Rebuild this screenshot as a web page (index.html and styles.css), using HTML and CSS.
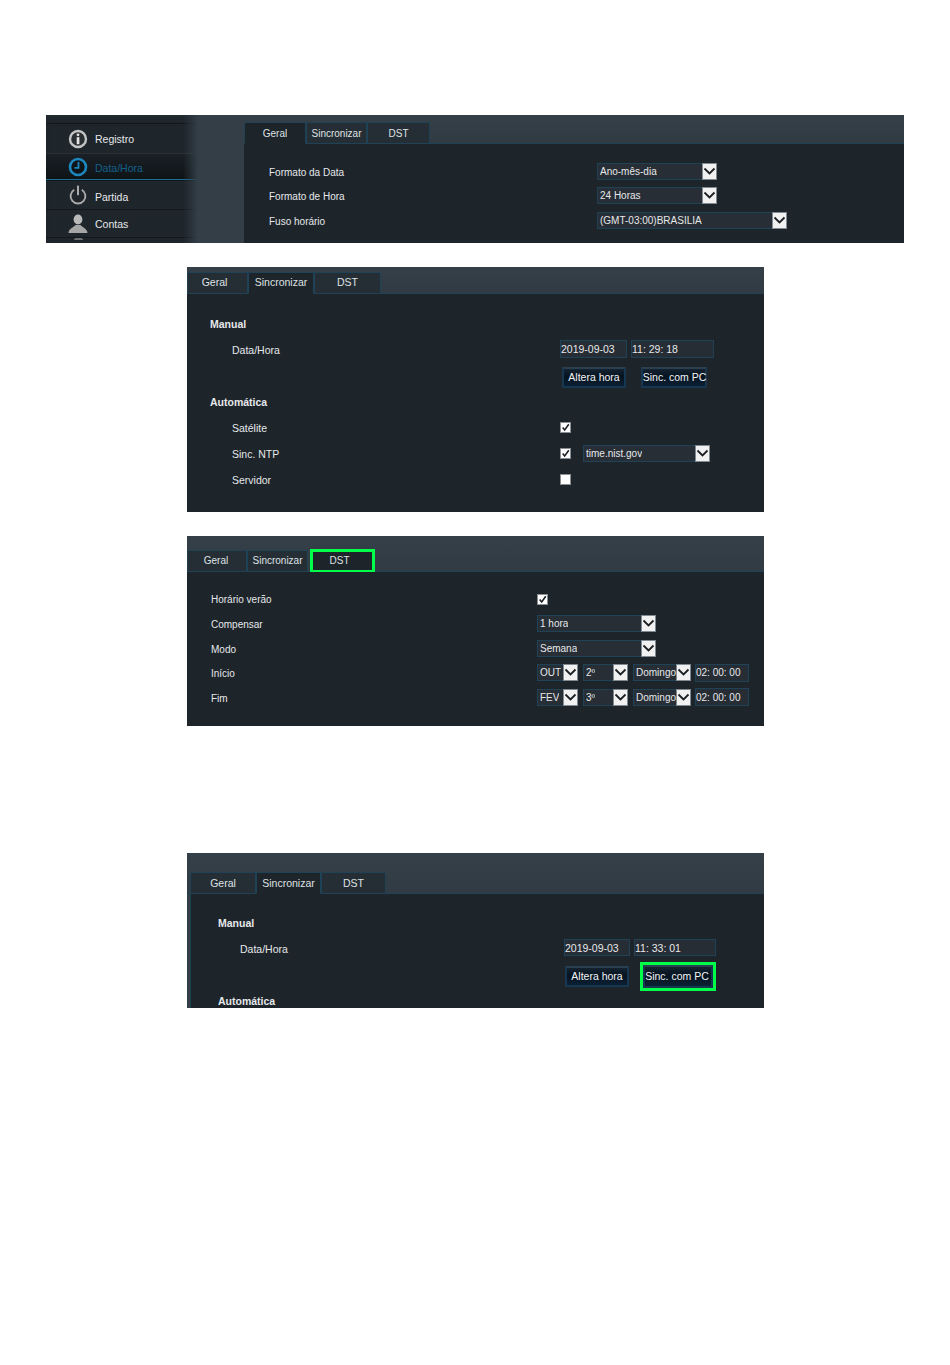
FILE: index.html
```html
<!DOCTYPE html>
<html lang="pt">
<head>
<meta charset="utf-8">
<title>Data/Hora</title>
<link rel="stylesheet" href="styles.css">
</head>
<body>
<svg class="defs" width="0" height="0" aria-hidden="true">
  <symbol id="chev" viewBox="0 0 13 13"><path d="M1.5 3.5 L6.5 8.5 L11.5 3.5" fill="none" stroke="#1b1f23" stroke-width="1.8"/></symbol>
  <symbol id="tick" viewBox="0 0 11 11"><path d="M2 5.5 L4.5 8.5 L9.5 1.5" fill="none" stroke="#1b1f23" stroke-width="1.9"/></symbol>
</svg>
<main class="page">

  <section class="panel panel-one">
    <nav class="side">
      <div class="side-item">
        <svg class="side-icon" viewBox="0 0 20 20"><circle cx="10" cy="10" r="8" fill="#2a2f33" stroke="#c4c4c4" stroke-width="2.4"/><circle cx="10" cy="5.8" r="1.4" fill="#e2e2e2"/><rect x="8.7" y="8.2" width="2.7" height="7" fill="#e2e2e2"/></svg>
        <span>Registro</span>
      </div>
      <div class="side-item side-active">
        <svg class="side-icon" viewBox="0 0 20 20"><circle cx="10" cy="10" r="8" fill="#0e1418" stroke="#1d86bd" stroke-width="2.6"/><path d="M10.5 5 V10.8 H6.5" fill="none" stroke="#1d86bd" stroke-width="1.8"/></svg>
        <span>Data/Hora</span>
      </div>
      <div class="side-item side-power">
        <svg class="side-icon" viewBox="0 0 20 20"><path d="M6.2 4.8 A7.4 7.4 0 1 0 13.8 4.8" fill="none" stroke="#a9a9a9" stroke-width="1.9"/><rect x="9" y="0.6" width="2" height="9.6" fill="#a9a9a9"/></svg>
        <span>Partida</span>
      </div>
      <div class="side-item side-last">
        <svg class="side-icon" viewBox="0 0 20 20"><ellipse cx="10" cy="5.5" rx="4.4" ry="5" fill="#b9b9b9"/><path d="M0.5 19 C1 14 6 13.5 7.5 11 H12.5 C14 13.5 19 14 19.5 19 Z" fill="#a6a6a6"/></svg>
        <span>Contas</span>
      </div>
      <div class="side-peek"></div>
    </nav>
    <div class="side-gap"></div>
    <div class="content">
      <div class="tabbar tabbar-one">
        <div class="tab tab-on tab-w62">Geral</div>
        <div class="tab tab-w61">Sincronizar</div>
        <div class="tab tab-w63">DST</div>
      </div>
      <div class="body body-one">
        <div class="row row-one"><span class="label label-one">Formato da Data</span>
          <div class="select w120"><span>Ano-mês-dia</span><i class="arrow"><svg><use href="#chev"/></svg></i></div></div>
        <div class="row row-one"><span class="label label-one">Formato de Hora</span>
          <div class="select w120"><span>24 Horas</span><i class="arrow"><svg><use href="#chev"/></svg></i></div></div>
        <div class="row row-one"><span class="label label-one">Fuso horário</span>
          <div class="select w190"><span>(GMT-03:00)BRASILIA</span><i class="arrow"><svg><use href="#chev"/></svg></i></div></div>
      </div>
    </div>
  </section>

  <section class="panel panel-sync">
    <div class="content">
      <div class="tabbar tabbar-sync">
        <div class="tab tab-w61">Geral</div>
        <div class="tab tab-on tab-w66">Sincronizar</div>
        <div class="tab tab-w67">DST</div>
      </div>
      <div class="body body-sync">
        <div class="row"><b class="label">Manual</b></div>
        <div class="row"><span class="label indent">Data/Hora</span>
          <div class="field w67">2019-09-03</div><div class="field w83 gap4">11: 29: 18</div></div>
        <div class="row row-btn"><span class="label"></span>
          <div class="btn b-first">Altera hora</div><div class="btn b-second">Sinc. com PC</div></div>
        <div class="row row-head"><b class="label">Automática</b></div>
        <div class="row"><span class="label indent">Satélite</span><div class="check"><svg><use href="#tick"/></svg></div></div>
        <div class="row"><span class="label indent">Sinc. NTP</span><div class="check"><svg><use href="#tick"/></svg></div>
          <div class="select w127 gap12"><span>time.nist.gov</span><i class="arrow"><svg><use href="#chev"/></svg></i></div></div>
        <div class="row"><span class="label indent">Servidor</span><div class="check"></div></div>
      </div>
    </div>
  </section>

  <section class="panel panel-dst">
    <div class="content">
      <div class="tabbar tabbar-dst">
        <div class="tab tab-w60">Geral</div>
        <div class="tab tab-w61">Sincronizar</div>
        <div class="tab tab-on tab-w63 tab-green">DST</div>
      </div>
      <div class="body body-dst">
        <div class="row row-d"><span class="label label-d">Horário verão</span><div class="check check-d"><svg><use href="#tick"/></svg></div></div>
        <div class="row row-d"><span class="label label-d">Compensar</span>
          <div class="select w119"><span>1 hora</span><i class="arrow"><svg><use href="#chev"/></svg></i></div></div>
        <div class="row row-d2"><span class="label label-d">Modo</span>
          <div class="select w119"><span>Semana</span><i class="arrow"><svg><use href="#chev"/></svg></i></div></div>
        <div class="row row-d2"><span class="label label-d">Início</span>
          <div class="select w41"><span>OUT</span><i class="arrow"><svg><use href="#chev"/></svg></i></div>
          <div class="select w45 gap5"><span>2º</span><i class="arrow"><svg><use href="#chev"/></svg></i></div>
          <div class="select w58 gap5"><span>Domingo</span><i class="arrow"><svg><use href="#chev"/></svg></i></div>
          <div class="field w54 gap4">02: 00: 00</div></div>
        <div class="row row-d2"><span class="label label-d">Fim</span>
          <div class="select w41"><span>FEV</span><i class="arrow"><svg><use href="#chev"/></svg></i></div>
          <div class="select w45 gap5"><span>3º</span><i class="arrow"><svg><use href="#chev"/></svg></i></div>
          <div class="select w58 gap5"><span>Domingo</span><i class="arrow"><svg><use href="#chev"/></svg></i></div>
          <div class="field w54 gap4">02: 00: 00</div></div>
      </div>
    </div>
  </section>

  <section class="panel panel-sync2">
    <div class="content">
      <div class="tabbar tabbar-sync2">
        <div class="tab tab-w66">Geral</div>
        <div class="tab tab-on tab-w65">Sincronizar</div>
        <div class="tab tab-w65">DST</div>
      </div>
      <div class="body body-sync2">
        <div class="row"><b class="label label-s2">Manual</b></div>
        <div class="row row-s2"><span class="label label-s2 indent">Data/Hora</span>
          <div class="field w66">2019-09-03</div><div class="field w82 gap4">11: 33: 01</div></div>
        <div class="row row-btn"><span class="label label-s2"></span>
          <div class="btn b-first2">Altera hora</div><div class="btn b-second2 btn-green">Sinc. com PC</div></div>
        <div class="row row-head"><b class="label label-s2">Automática</b></div>
      </div>
    </div>
  </section>

</main>
</body>
</html>
```

FILE: styles.css
```css
* { box-sizing: border-box; }
html, body { margin: 0; background: #fff; }
body { font-family: "Liberation Sans", Arial, sans-serif; font-size: 10.5px; color: #e6e8ea; }
.defs { display: block; height: 0; }
.page { width: 950px; height: 1365px; padding-top: 115px; overflow: hidden; }

.panel { display: flex; background: #333e47; overflow: hidden; }
.panel-one { margin-left: 46px; width: 858px; height: 128px; }
.panel-sync { margin: 24px 0 0 187px; width: 577px; height: 245px; }
.panel-dst { margin: 24px 0 0 187px; width: 577px; height: 190px; }
.panel-sync2 { margin: 127px 0 0 187px; width: 577px; height: 155px; }

/* sidebar */
.side { width: 152px; padding-top: 8px; flex: none; background: #1e252b; position: relative; box-shadow: inset 0 8px 6px -4px #232a30; }
.side::after { content: ""; position: absolute; top: 0; right: 0; bottom: 0; width: 15px; background: linear-gradient(90deg, rgba(51,62,71,0), #333e47); }
.side-gap { width: 46px; flex: none; }
.side-item { display: flex; align-items: center; height: 29px; padding-left: 22px; gap: 7px; border-top: 1px solid #12171b; color: #e6e8ea; }
.side-item:first-child { height: 30px; }
.side-icon { width: 20px; height: 20px; flex: none; }
.side-active { height: 27px; padding-top: 1px; background: linear-gradient(#1a2025, #0e1316); color: #14608c; border-bottom: 1px solid #1a6e9c; border-top-color: #2a3036; }
.side-active span { margin-top: 1px; }
.side-power span { margin-top: 4px; }
.side-last { height: 29px; border-bottom: 1px solid #12171b; }
.side-peek { width: 9px; height: 2px; margin: 0 0 0 28px; background: #6d6d6d; border-radius: 4px 4px 0 0; }

/* tabs */
.content { flex: 1; display: flex; flex-direction: column; min-width: 0; }
.tabbar { display: flex; align-items: flex-end; flex: none; background: linear-gradient(#343f48, #303b44); border-bottom: 1px solid #1f4257; }
.tabbar-one { height: 29px; }
.tabbar-sync { height: 27px; }
.tabbar-dst { height: 36px; }
.tabbar-sync2 { height: 41px; padding-left: 3px; }
.tab { height: 22px; margin-bottom: -1px; display: flex; align-items: center; justify-content: center; background: #262e35; border: 1px solid #1f4257; color: #dfe2e4; padding-bottom: 1px; }
.tab-on { background: #1d242a; border-bottom-color: #1d242a; }
.tabbar-one .tab, .tabbar-dst .tab { font-size: 10px; }
.tabbar-one .tab { padding-bottom: 0; }
.tabbar-sync .tab { padding-bottom: 3px; }
.tabbar-sync .tab:first-child { padding-right: 6px; }
.tabbar-dst .tab:first-child { padding-right: 2px; padding-bottom: 2px; }
.tabbar-dst .tab:nth-child(2) { padding-bottom: 2px; }
.tab-w60 { width: 60px; }
.tab-w61 { width: 61px; }
.tab-w62 { width: 62px; }
.tab-w63 { width: 63px; }
.tab-w65 { width: 65px; }
.tab-w66 { width: 66px; }
.tab-w67 { width: 67px; }
.tabbar-dst .tab-green { width: 65px; margin: 0 0 -2px 2px; height: 24px; padding-right: 6px; border: 3px solid #00ff48; }

/* body */
.body { flex: 1; background: #1d242a; min-height: 0; }
.body-one { padding: 16px 0 0 25px; font-size: 10px; }
.body-sync { padding: 17px 0 0 23px; }
.body-dst { padding: 15px 0 0 24px; font-size: 10px; }
.body-sync2 { margin-left: 3px; padding: 16px 0 0 27px; border-left: 1px solid #1f4257; }

.row { display: flex; align-items: center; height: 26px; }
.row-one { height: 24.5px; }
.row-btn { height: 28px; }
.row-head { height: 22px; margin-bottom: 2px; }
.row-d { height: 25px; }
.row-d2 { height: 24.5px; }

.label { width: 350px; flex: none; font-weight: normal; }
b.label { font-weight: bold; }
.indent { padding-left: 22px; }
.label-one { width: 328px; }
.label-d { width: 326px; }
.label-s2 { width: 346px; }

/* controls */
.select { display: flex; align-items: center; justify-content: space-between; height: 17px; margin-top: -2px; background: #272e35; border: 1px solid #1f4257; padding-left: 2px; flex: none; white-space: nowrap; color: #e6e8ea; font-size: 10px; }
.select span { overflow: hidden; }
.arrow { display: flex; align-items: center; justify-content: center; width: 15px; height: 17px; margin: -1px -1px -1px 0; background: #f1f1f1; border: 1px solid #7f8a92; flex: none; }
.arrow svg { width: 13px; height: 13px; display: block; }
.field { height: 18px; margin-top: -2px; display: flex; align-items: center; background: #262d34; border: 1px solid #1f4257; flex: none; white-space: nowrap; color: #e6e8ea; }
.row-s2 .field { height: 17px; margin-top: -3px; }
.check { width: 11px; height: 11px; margin-top: -2px; background: #fff; border: 1px solid #8a8f94; flex: none; }
.check svg { width: 9px; height: 9px; display: block; }
.check-d { margin-top: 0; }
.btn { height: 21px; display: flex; align-items: center; justify-content: center; flex: none; white-space: nowrap; color: #f2f4f6; background: linear-gradient(#152230, #061320 45%, #0b2034); border: 2px solid #173751; border-top-color: #2a3f50; }

.w41 { width: 41px; }
.w45 { width: 45px; }
.w54 { width: 54px; }
.w58 { width: 58px; }
.w66 { width: 66px; }
.w67 { width: 67px; }
.w82 { width: 82px; }
.w83 { width: 83px; }
.w119 { width: 119px; }
.w120 { width: 120px; }
.w127 { width: 127px; }
.w190 { width: 190px; }
.gap4 { margin-left: 4px; }
.gap5 { margin-left: 5px; }
.gap12 { margin-left: 12px; }

.b-first { width: 64px; margin-left: 2px; }
.b-second { width: 66px; margin-left: 15px; padding-left: 1px; }
.b-first2 { width: 64px; margin-left: 1px; }
.b-second2 { width: 66px; margin-left: 14px; }
.btn-green { outline: 3px solid #00ff48; width: 70px; height: 23px; margin-left: 14px; padding-right: 2px; }
```
